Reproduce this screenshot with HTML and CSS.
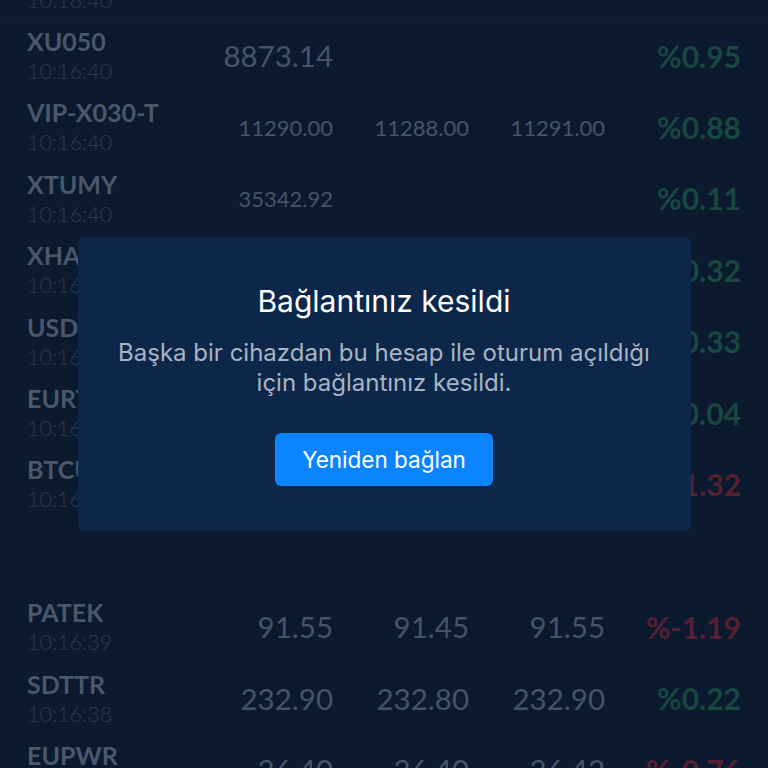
FILE: index.html
```html
<!DOCTYPE html>
<html lang="tr">
<head>
<meta charset="utf-8">
<title>Piyasa</title>
<link rel="stylesheet" href="styles.css">
</head>
<body>
<div class="list">
  <div class="row"><div class="id"><div class="name">XU100</div><div class="time">10:16:40</div></div><div class="num big">10512.40</div><div class="num"></div><div class="num"></div><div class="pct up">%0.71</div></div>
  <div class="row"><div class="id"><div class="name">XU050</div><div class="time">10:16:40</div></div><div class="num big">8873.14</div><div class="num"></div><div class="num"></div><div class="pct up">%0.95</div></div>
  <div class="row"><div class="id"><div class="name">VIP-X030-T</div><div class="time">10:16:40</div></div><div class="num small">11290.00</div><div class="num small">11288.00</div><div class="num small">11291.00</div><div class="pct up">%0.88</div></div>
  <div class="row"><div class="id"><div class="name">XTUMY</div><div class="time">10:16:40</div></div><div class="num small">35342.92</div><div class="num"></div><div class="num"></div><div class="pct up">%0.11</div></div>
  <div class="row"><div class="id"><div class="name">XHAUSD</div><div class="time">10:16:40</div></div><div class="num"></div><div class="num"></div><div class="num"></div><div class="pct up">%0.32</div></div>
  <div class="row"><div class="id"><div class="name">USDTRY</div><div class="time">10:16:40</div></div><div class="num"></div><div class="num"></div><div class="num"></div><div class="pct up">%0.33</div></div>
  <div class="row"><div class="id"><div class="name">EURTRY</div><div class="time">10:16:40</div></div><div class="num"></div><div class="num"></div><div class="num"></div><div class="pct up">%0.04</div></div>
  <div class="row"><div class="id"><div class="name">BTCUSD</div><div class="time">10:16:40</div></div><div class="num"></div><div class="num"></div><div class="num"></div><div class="pct down">%-1.32</div></div>
  <div class="row"></div>
  <div class="row"><div class="id"><div class="name">PATEK</div><div class="time">10:16:39</div></div><div class="num big">91.55</div><div class="num big">91.45</div><div class="num big">91.55</div><div class="pct down">%-1.19</div></div>
  <div class="row"><div class="id"><div class="name">SDTTR</div><div class="time">10:16:38</div></div><div class="num big">232.90</div><div class="num big">232.80</div><div class="num big">232.90</div><div class="pct up">%0.22</div></div>
  <div class="row"><div class="id"><div class="name">EUPWR</div><div class="time">10:16:38</div></div><div class="num big">36.40</div><div class="num big">36.40</div><div class="num big">36.42</div><div class="pct down">%-0.76</div></div>
</div>

<div class="overlay">
  <div class="dialog">
    <h1 class="title">Bağlantınız kesildi</h1>
    <p class="msg">Başka bir cihazdan bu hesap ile oturum açıldığı<br>için bağlantınız kesildi.</p>
    <button class="btn" type="button">Yeniden bağlan</button>
  </div>
</div>
</body>
</html>
```

FILE: styles.css
```css
html, body {
  margin: 0;
  padding: 0;
  height: 100%;
  overflow: hidden;
  background: #0b1a2f;
}

.list {
  margin-top: -49.4px;
  font-family: "Lato", "Noto Sans", sans-serif;
}

.row {
  height: 71.4px;
  box-sizing: border-box;
  padding: 0 27px 4px;
  display: grid;
  grid-template-columns: 1fr 136px 136px 136px 136px;
  align-items: center;
}

.row:first-child {
  border-bottom: 1px solid #0f1e33;
}

.id {
  display: flex;
  flex-direction: column;
  align-self: start;
  padding-top: 5px;
}

.name {
  font-weight: 700;
  font-size: 25px;
  line-height: 29px;
  color: #4a586c;
  white-space: nowrap;
}

.time {
  font-size: 21.5px;
  line-height: 31px;
  font-weight: 300;
  color: #2b3a4e;
  white-space: nowrap;
}

.num {
  text-align: right;
  color: #46546a;
  white-space: nowrap;
}

.num.big {
  font-size: 29.5px;
}

.num.small {
  font-size: 22px;
}

.pct {
  text-align: right;
  font-size: 30px;
  font-weight: 700;
  white-space: nowrap;
}

.pct.up {
  color: #18483f;
}

.pct.down {
  color: #552131;
}

.overlay {
  position: fixed;
  inset: 0;
  display: flex;
  align-items: center;
  justify-content: center;
}

.dialog {
  width: 613px;
  height: 294px;
  box-sizing: border-box;
  background: #0c274a;
  border-radius: 6px;
  padding-top: 46px;
  display: flex;
  flex-direction: column;
  align-items: center;
  font-family: "Inter", "Roboto", sans-serif;
  text-align: center;
}

.title {
  margin: 0;
  font-size: 30px;
  line-height: 36px;
  font-weight: 400;
  color: #ffffff;
}

.msg {
  margin: 19px 0 0;
  font-size: 24px;
  line-height: 30px;
  color: #a9b3c2;
  white-space: nowrap;
}

.btn {
  margin-top: 35px;
  width: 218px;
  height: 53px;
  border: 0;
  border-radius: 6px;
  background: #0a84ff;
  color: #ffffff;
  font-family: "Inter", "Roboto", sans-serif;
  font-size: 22.5px;
}
```
